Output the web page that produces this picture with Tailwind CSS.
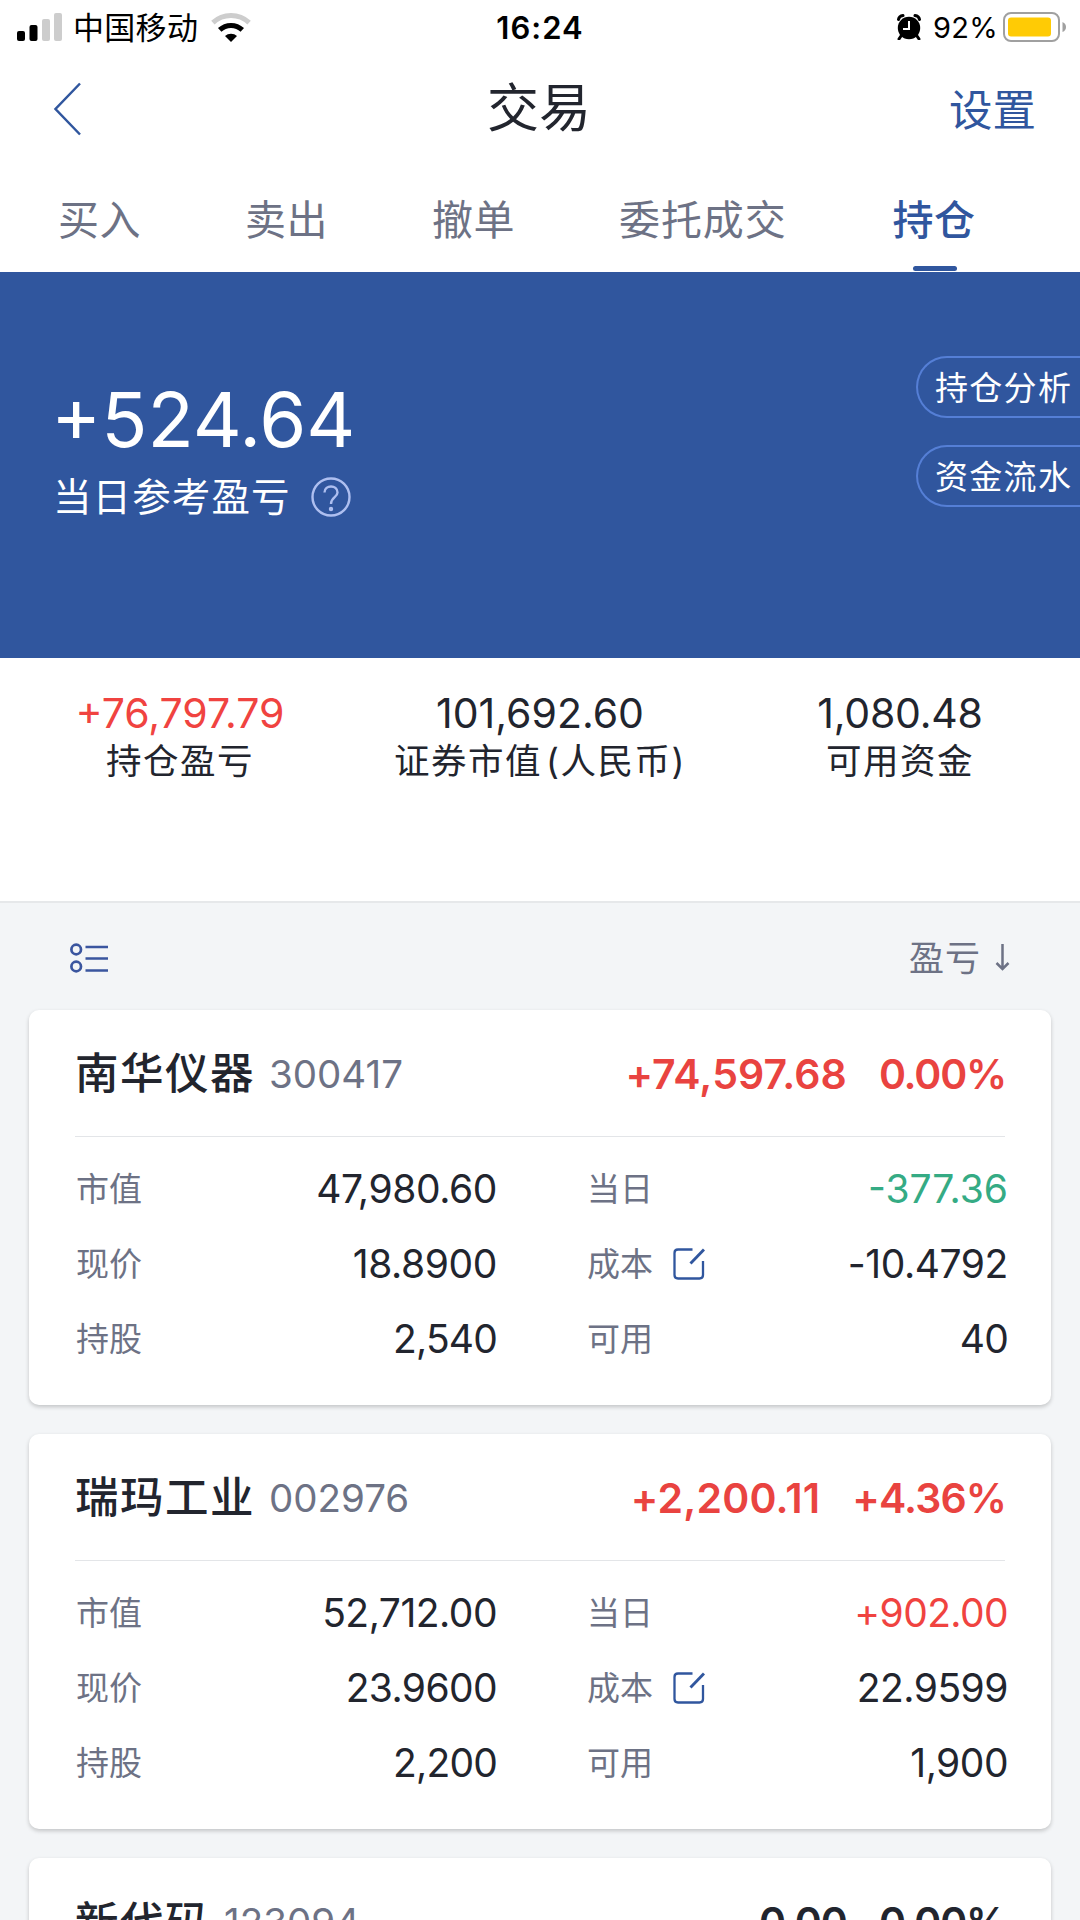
<!DOCTYPE html>
<html lang="zh-CN">
<head>
  <meta charset="UTF-8" />
  <meta name="viewport" content="width=device-width, initial-scale=1.0"/>
  <title>交易</title>
  <script src="https://cdn.jsdelivr.net/npm/@tailwindcss/browser@4"></script>
  <style>
    body {
      font-family: 'Inter', 'Noto Sans CJK SC', sans-serif;
    }
  </style>
</head>
<body class="bg-[#f3f5f7] w-[1080px] h-[1920px] overflow-hidden leading-none text-[#22252e]">

  <header class="bg-white h-[272px] flex flex-col">
    <!-- Status bar -->
    <div class="h-[54px] grid grid-cols-3 items-center text-black">
      <div class="flex items-center pl-[17px]">
        <svg class="w-[46px] h-[30px]" viewBox="0 0 46 30">
          <rect x="0" y="19" width="8" height="10" rx="2"/>
          <rect x="12.500" y="13" width="8" height="16" rx="2"/>
          <rect x="25" y="7" width="8" height="22" rx="2" fill="#cdcdcd"/>
          <rect x="37" y="1" width="8" height="28" rx="2" fill="#cdcdcd"/>
        </svg>
        <span class="ml-[10px] text-[31px] tracking-[0.3px]">中国移动</span>
        <svg class="ml-[13px] w-[40px] h-[31px]" viewBox="0 0 40 31">
          <path d="M1.900 10.600 A26.500 26.500 0 0 1 38.100 10.600" fill="none" stroke="#cdcdcd" stroke-width="5"/>
          <path d="M8.700 17.900 A16.500 16.500 0 0 1 31.300 17.900" fill="none" stroke="#000" stroke-width="5"/>
          <path d="M20 30 L14 24 A9 9 0 0 1 26 24 Z"/>
        </svg>
      </div>
      <div class="text-center text-[31px] tracking-[1px] font-semibold">16:24</div>
      <div class="flex items-center justify-end pr-[13px]">
        <svg class="w-6 h-[26px]" viewBox="0 0 24 26">
          <circle cx="12" cy="14" r="11.200"/>
          <path d="M1.500 5.500 Q2 2 6 1.500 M22.500 5.500 Q22 2 18 1.500 M4 22 L2 25 M20 22 L22 25" stroke="#000" stroke-width="3" fill="none" stroke-linecap="round"/>
          <path d="M12 7 V15 H6" stroke="#fff" stroke-width="2" fill="none"/>
        </svg>
        <span class="ml-[12px] text-[29px] tracking-[0.3px]">92%</span>
        <svg class="ml-[5px] w-[64px] h-[30px]" viewBox="0 0 64 30">
          <rect x="1" y="1" width="55" height="28" rx="7" fill="#fff" stroke="#a0a0a0" stroke-width="2"/>
          <rect x="5" y="5.500" width="43" height="19" rx="3" fill="#ffcb05"/>
          <path d="M59.500 10 Q63 11.500 63 15 Q63 18.500 59.500 20 Z" fill="#a0a0a0"/>
        </svg>
      </div>
    </div>

    <!-- Nav bar -->
    <div class="h-[110px] grid grid-cols-3 items-center">
      <svg class="ml-[53px] w-7 h-[54px]" viewBox="0 0 28 54" fill="none" stroke="#30569e" stroke-width="2.500"><path d="M27 1.500 L2.500 27 L27 52.500"/></svg>
      <h1 class="pr-[2px] text-center text-[52px] font-normal">交易</h1>
      <div class="text-right pt-[3px] pr-[44px] text-[43.5px] text-[#30569e]">设置</div>
    </div>

    <!-- Tabs -->
    <nav class="h-[108px] pl-[58px] flex items-stretch gap-[104px] text-[41px] tracking-[0.5px] text-[#6d7285]">
      <span class="pt-[36px]">买入</span>
      <span class="pt-[36px]">卖出</span>
      <span class="pt-[36px]">撤单</span>
      <span class="pt-[36px] tracking-[0.9px]">委托成交</span>
      <span class="relative ml-[2px] pt-[36px] font-medium text-[#30569e]">持仓
        <i class="absolute bottom-[1px] left-5 w-[44px] h-[5px] rounded-full bg-[#30569e]"></i>
      </span>
    </nav>
  </header>

  <!-- Daily profit -->
  <section class="h-[386px] bg-[#30569e] text-white flex justify-between">
    <div class="pl-[53px] pt-[109px]">
      <div class="-ml-[2px] text-[76px]">+524.64</div>
      <div class="mt-[20px] flex items-center">
        <span class="pt-[1px] text-[38.5px] tracking-[1.100px]">当日参考盈亏</span>
        <svg class="ml-[20px] w-10 h-10" viewBox="0 0 40 40" fill="none" stroke="#aebff0" stroke-width="2.400">
          <circle cx="20" cy="20" r="18.500"/>
          <path d="M13.500 15.500 C13.500 7.500 26.500 7.500 26.500 15.500 C26.500 20.500 20 20 20 27"/>
          <circle cx="20" cy="32" r="1" fill="#aebff0"/>
        </svg>
      </div>
    </div>
    <div class="pt-[84px] flex flex-col gap-[27px] text-[33px] tracking-[1.300px]">
      <div class="w-[164px] h-[62px] pl-[17px] pt-[2px] flex items-center whitespace-nowrap rounded-l-full border-2 border-r-0 border-[#557fd6]">持仓分析</div>
      <div class="w-[164px] h-[62px] pl-[17px] pt-[2px] flex items-center whitespace-nowrap rounded-l-full border-2 border-r-0 border-[#557fd6]">资金流水</div>
    </div>
  </section>

  <!-- Account summary -->
  <section class="h-[245px] pt-[35px] bg-white border-b-2 border-[#e6e8ea] grid grid-cols-3 text-center">
    <div>
      <div class="text-[41px] text-[#f04340]">+76,797.79</div>
      <div class="mt-[10px] text-[35.5px] tracking-[1.500px]">持仓盈亏</div>
    </div>
    <div>
      <div class="text-[41px]">101,692.60</div>
      <div class="mt-[10px] text-[35.5px] tracking-[1.500px]">证券市值<span class="ml-[4px]">(</span>人民币)</div>
    </div>
    <div>
      <div class="text-[41px] tracking-[-0.2px]">1,080.48</div>
      <div class="mt-[10px] text-[35.5px] tracking-[1.500px]">可用资金</div>
    </div>
  </section>

  <!-- List toolbar -->
  <div class="h-[107px] pt-[2px] pl-[70px] pr-[70px] flex items-center justify-between">
    <svg class="w-[39px] h-[30px]" viewBox="0 0 39 30" fill="none" stroke="#3a559f" stroke-width="2.700">
      <circle cx="6.200" cy="6.500" r="4.800"/>
      <circle cx="6.200" cy="23.500" r="4.800"/>
      <path d="M15.500 4 H38 M15.500 15.500 H38 M15.500 27.500 H38"/>
    </svg>
    <div class="flex items-center text-[#6d7285]">
      <span class="pt-[1px] text-[35px] tracking-[1px]">盈亏</span>
      <svg class="ml-[14px] w-[15px] h-[27px]" viewBox="0 0 15 27" fill="none" stroke="#6d7285" stroke-width="2.500"><path d="M7.500 0 V25 M1.500 19 L7.500 25 L13.500 19"/></svg>
    </div>
  </div>

  <!-- Holdings -->
  <main class="px-[29px] flex flex-col gap-[29px]">
    <article class="h-[395px] px-[46px] bg-white rounded-[10px] shadow-[0_2px_4px_rgba(0,0,0,0.2)]">
      <div class="h-[127px] pt-[2px] flex items-center border-b border-[#e3e5e8]">
        <h2 class="text-[43.5px] tracking-[1.500px] font-medium">南华仪器</h2>
        <span class="ml-[14px] text-[38.5px] text-[#6d7285]">300417</span>
        <span class="ml-auto text-[41px] tracking-[0.1px] font-semibold text-[#e94340]">+74,597.68</span>
        <span class="ml-[32px] -mr-[1px] text-[41px] tracking-[-1.200px] font-semibold text-[#e94340]">0.00%</span>
      </div>
      <div class="mt-[14px] -mr-[3px] ml-[1px] grid grid-cols-[421px_1fr] gap-x-[90px] auto-rows-[75px] items-center text-[39px] tracking-[-0.4px]">
        <div class="flex items-center justify-between"><span class="pt-[2px] text-[33px] tracking-normal text-[#6d7285]">市值</span><span>47,980.60</span></div>
        <div class="flex items-center justify-between"><span class="pt-[2px] text-[33px] tracking-normal text-[#6d7285]">当日</span><span class="tracking-normal text-[#35ab84]">-377.36</span></div>
        <div class="flex items-center justify-between"><span class="pt-[2px] text-[33px] tracking-normal text-[#6d7285]">现价</span><span>18.8900</span></div>
        <div class="flex items-center">
          <span class="pt-[2px] text-[33px] tracking-normal text-[#6d7285]">成本</span>
          <svg class="ml-5 w-8 h-8" viewBox="0 0 32 32" fill="none" stroke="#30569e" stroke-width="2.300"><path d="M19.500 1.500 H5 Q1.500 1.500 1.500 5 V27 Q1.500 30.500 5 30.500 H26.500 Q30 30.500 30 27 V13"/><path d="M31 1.500 L17.500 15.500" stroke-width="2.900"/></svg>
          <span class="ml-auto">-10.4792</span>
        </div>
        <div class="flex items-center justify-between"><span class="pt-[2px] text-[33px] tracking-normal text-[#6d7285]">持股</span><span class="tracking-[-0.8px]">2,540</span></div>
        <div class="flex items-center justify-between"><span class="pt-[2px] text-[33px] tracking-normal text-[#6d7285]">可用</span><span class="tracking-[-0.8px]">40</span></div>
      </div>
    </article>

    <article class="h-[395px] px-[46px] bg-white rounded-[10px] shadow-[0_2px_4px_rgba(0,0,0,0.2)]">
      <div class="h-[127px] pt-[2px] flex items-center border-b border-[#e3e5e8]">
        <h2 class="text-[43.5px] tracking-[1.500px] font-medium">瑞玛工业</h2>
        <span class="ml-[14px] text-[38.5px] text-[#6d7285]">002976</span>
        <span class="ml-auto text-[41px] tracking-[0.2px] font-semibold text-[#e94340]">+2,200.11</span>
        <span class="ml-[32px] -mr-[1px] text-[41px] tracking-[-0.9px] font-semibold text-[#e94340]">+4.36%</span>
      </div>
      <div class="mt-[14px] -mr-[3px] ml-[1px] grid grid-cols-[421px_1fr] gap-x-[90px] auto-rows-[75px] items-center text-[39px] tracking-[-0.5px]">
        <div class="flex items-center justify-between"><span class="pt-[2px] text-[33px] tracking-normal text-[#6d7285]">市值</span><span>52,712.00</span></div>
        <div class="flex items-center justify-between"><span class="pt-[2px] text-[33px] tracking-normal text-[#6d7285]">当日</span><span class="tracking-[-0.6px] text-[#f04340]">+902.00</span></div>
        <div class="flex items-center justify-between"><span class="pt-[2px] text-[33px] tracking-normal text-[#6d7285]">现价</span><span class="tracking-[-0.6px]">23.9600</span></div>
        <div class="flex items-center">
          <span class="pt-[2px] text-[33px] tracking-normal text-[#6d7285]">成本</span>
          <svg class="ml-5 w-8 h-8" viewBox="0 0 32 32" fill="none" stroke="#30569e" stroke-width="2.300"><path d="M19.500 1.500 H5 Q1.500 1.500 1.500 5 V27 Q1.500 30.500 5 30.500 H26.500 Q30 30.500 30 27 V13"/><path d="M31 1.500 L17.500 15.500" stroke-width="2.900"/></svg>
          <span class="ml-auto">22.9599</span>
        </div>
        <div class="flex items-center justify-between"><span class="pt-[2px] text-[33px] tracking-normal text-[#6d7285]">持股</span><span class="tracking-[-0.8px]">2,200</span></div>
        <div class="flex items-center justify-between"><span class="pt-[2px] text-[33px] tracking-normal text-[#6d7285]">可用</span><span>1,900</span></div>
      </div>
    </article>

    <article class="h-[395px] px-[46px] bg-white rounded-[10px] shadow-[0_2px_4px_rgba(0,0,0,0.2)]">
      <div class="h-[127px] pt-[2px] flex items-center">
        <h2 class="text-[43.5px] tracking-[1.500px] font-medium">新代码</h2>
        <span class="ml-[14px] text-[38.5px] text-[#6d7285]">123094</span>
        <span class="ml-auto text-[41px] tracking-[-1px] font-semibold">0.00</span>
        <span class="ml-[32px] -mr-[1px] text-[41px] tracking-[-1.200px] font-semibold">0.00%</span>
      </div>
    </article>
  </main>

</body>
</html>
